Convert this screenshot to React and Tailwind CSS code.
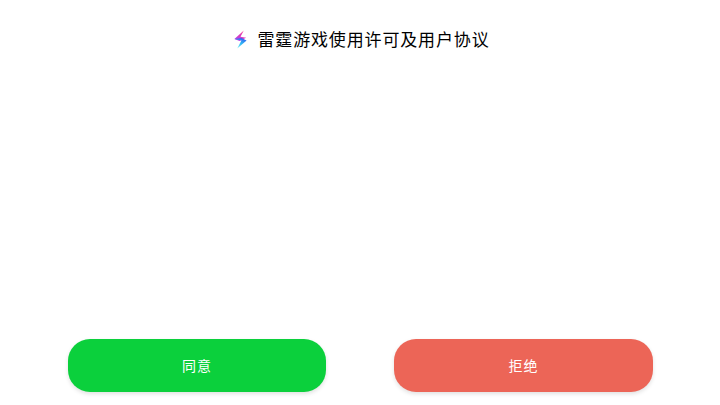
export default function App() {
  return (
    <div className="w-[720px] h-[405px] bg-white flex flex-col justify-between overflow-hidden font-['Noto_Sans_CJK_SC',sans-serif]">
      <div className="flex items-center justify-center h-[20px] mt-[29px] gap-[9px] pl-[3px]">
        <svg width="15" height="21" viewBox="0 0 16 20" className="shrink-0">
          <defs>
            <linearGradient id="a" x1="0.8" y1="0" x2="0.2" y2="1">
              <stop offset="0" stopColor="#ff3f8e" />
              <stop offset="1" stopColor="#b03cf0" />
            </linearGradient>
            <linearGradient id="b" x1="0.7" y1="0" x2="0.3" y2="1">
              <stop offset="0" stopColor="#2f5cf0" />
              <stop offset="0.5" stopColor="#34b8f4" />
              <stop offset="1" stopColor="#7cf0f4" />
            </linearGradient>
          </defs>
          <path d="M11.5 0.5 L1.5 9.5 L7 11.5 L14 8 L8 7 Z" fill="url(#a)" />
          <path d="M1.5 9.5 L9 11 L4.5 19.5 L14.5 11 L9 8.5 Z" fill="url(#b)" />
        </svg>
        <span className="text-[17px] leading-[20px] text-[#000] tracking-[0.85px] font-normal">雷霆游戏使用许可及用户协议</span>
      </div>
      <div className="flex justify-between pl-[68px] pr-[67px] mb-[13px]">
        <div className="w-[258px] h-[53px] rounded-[22px] bg-[#0bd03c] shadow-[0_2px_4px_rgba(0,0,0,0.12)] flex items-center justify-center text-white text-[14px] tracking-[1px] font-normal">同意</div>
        <div className="w-[259px] h-[53px] rounded-[22px] bg-[#ec6557] shadow-[0_2px_4px_rgba(0,0,0,0.12)] flex items-center justify-center text-white text-[14px] tracking-[1px] font-normal">拒绝</div>
      </div>
    </div>
  );
}
